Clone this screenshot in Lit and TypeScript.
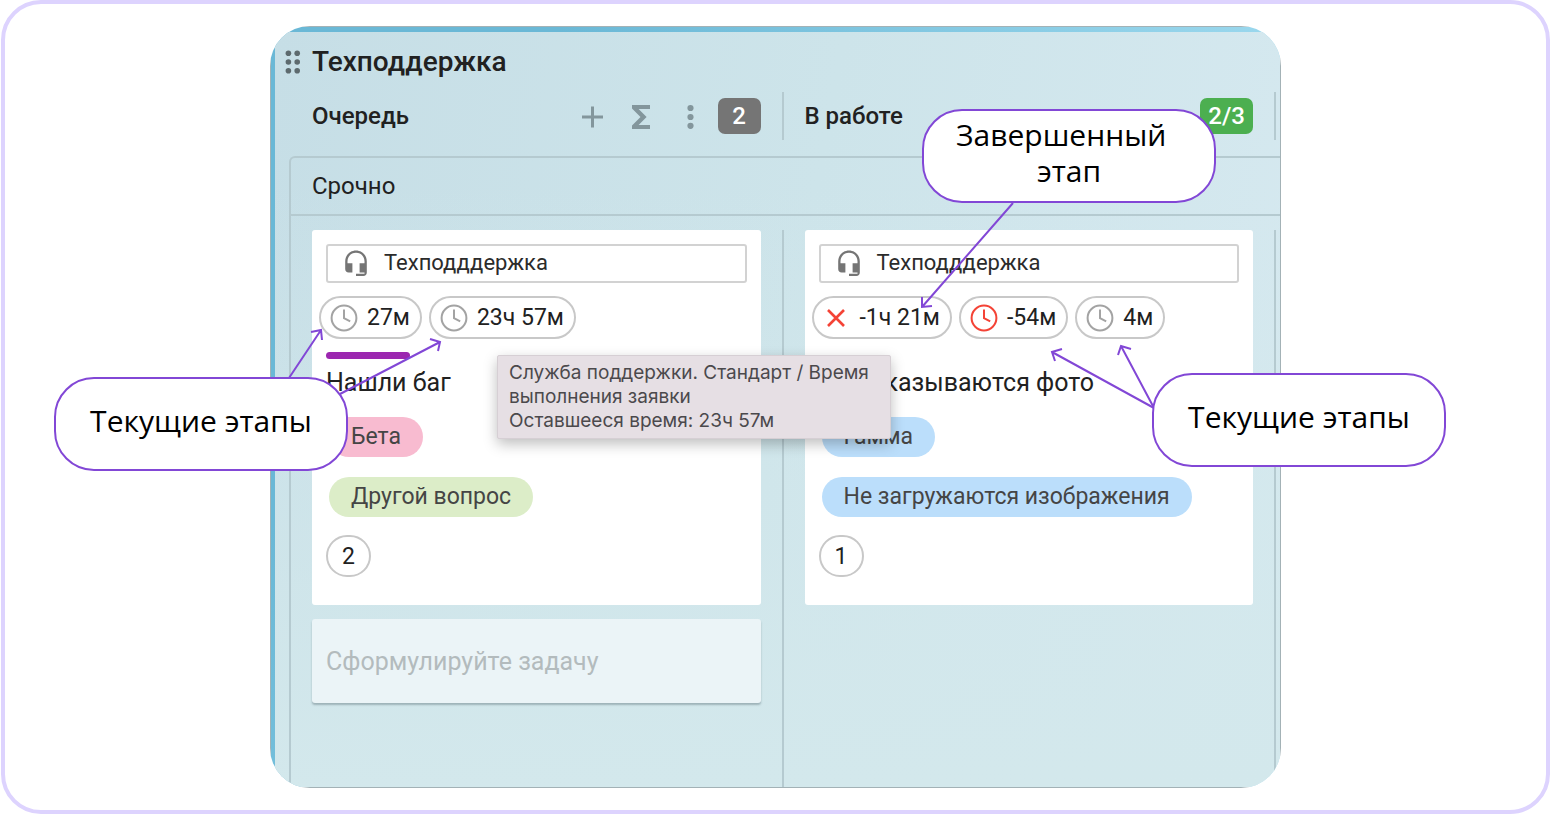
import { LitElement, html, svg, css, nothing } from "lit";
import { customElement, property } from "lit/decorators.js";

type Timer = { text: string; state: "normal" | "late" | "missed" };
type Tag = { text: string; tone: "pink" | "green" | "blue" };
type Card = { type: string; timers: Timer[]; bar: boolean; title: string; tags: Tag[]; count: number };

const FIRST: Card = {
  type: "Техподддержка",
  timers: [
    { text: "27м", state: "normal" },
    { text: "23ч 57м", state: "normal" },
  ],
  bar: true,
  title: "Нашли баг",
  tags: [
    { text: "Бета", tone: "pink" },
    { text: "Другой вопрос", tone: "green" },
  ],
  count: 2,
};

const SECOND: Card = {
  type: "Техподддержка",
  timers: [
    { text: "-1ч 21м", state: "missed" },
    { text: "-54м", state: "late" },
    { text: "4м", state: "normal" },
  ],
  bar: false,
  title: "Не показываются фото",
  tags: [
    { text: "Гамма", tone: "blue" },
    { text: "Не загружаются изображения", tone: "blue" },
  ],
  count: 1,
};

const clockIcon = html`<svg width="28" height="28" viewBox="0 0 28 28" fill="none" stroke="currentColor" stroke-width="2" aria-hidden="true">
  <circle cx="14" cy="14" r="12.4"></circle>
  <path d="M14 5.5V14.2L20.2 17.4"></path>
</svg>`;

const crossIcon = html`<svg width="28" height="28" viewBox="0 0 28 28" fill="none" stroke="currentColor" stroke-width="2.6" aria-hidden="true">
  <path d="M5 6L21 22M21 6L5 22"></path>
</svg>`;

const headsetIcon = html`<svg width="24" height="28" viewBox="0 0 24 28" aria-hidden="true">
  <path
    fill="#757575"
    d="M12 0.500C6 0.500 1.200 5.300 1.200 11.300V19C1.200 21 2.600 22.500 4.600 22.500H8.400V13.300H3.500V11.300C3.500 6.500 7.200 2.800 12 2.800S20.500 6.500 20.500 11.300V13.300H15.600V22.500H20.500V23.700H12V26H19.400C21.400 26 22.800 24.600 22.800 22.600V11.300C22.800 5.300 18 0.500 12 0.500Z"
  ></path>
</svg>`;

@customElement("task-card")
export class TaskCard extends LitElement {
  @property({ attribute: false }) card!: Card;

  static styles = css`
    :host {
      display: block;
    }
    .card {
      padding: 14px 14px 28px;
      background: #fff;
      border-radius: 3px;
    }
    .type {
      display: flex;
      align-items: center;
      gap: 16px;
      height: 35px;
      padding: 0 16px;
      border: 2px solid #d2d2d2;
      border-radius: 3px;
      font-size: 22px;
      line-height: 32px;
      color: #2b2b2b;
    }
    .type-name {
      padding-bottom: 2px;
    }
    .timers {
      display: flex;
      gap: 7px;
      margin: 13px 0 0 -7px;
    }
    .timer {
      display: flex;
      align-items: center;
      gap: 9px;
      height: 39px;
      padding: 0 10px 0 9px;
      border: 2px solid #c8c8c8;
      border-radius: 22px;
      font-size: 23px;
      white-space: nowrap;
    }
    .timer svg {
      color: #a3a3a3;
    }
    .late svg,
    .missed svg {
      color: #f44336;
    }
    .strip {
      height: 17px;
      padding-top: 13px;
    }
    .bar {
      width: 84px;
      height: 7px;
      border-radius: 4px;
      background: #9c27b0;
    }
    .title {
      margin: 0;
      font-size: 25px;
      font-weight: 400;
      line-height: 28px;
    }
    .tags {
      display: flex;
      flex-direction: column;
      align-items: flex-start;
      gap: 20px;
      margin: 20px 0 0 3px;
    }
    .tag {
      padding: 0 22px;
      border-radius: 20px;
      font-size: 23px;
      line-height: 40px;
      color: #454545;
      white-space: nowrap;
    }
    .pink {
      background: #f8bbd0;
    }
    .green {
      background: #dcedc8;
    }
    .blue {
      background: #bbdefb;
    }
    .count {
      display: flex;
      align-items: center;
      justify-content: center;
      width: 41px;
      height: 38px;
      margin-top: 18px;
      border: 2px solid #c8c8c8;
      border-radius: 22px;
      font-size: 23px;
    }
  `;

  render() {
    const c = this.card;
    return html`<article class="card">
      <div class="type">${headsetIcon}<span class="type-name">${c.type}</span></div>
      <div class="timers">
        ${c.timers.map(
          (t) => html`<span class="timer ${t.state}">${t.state === "missed" ? crossIcon : clockIcon}<span>${t.text}</span></span>`
        )}
      </div>
      <div class="strip">${c.bar ? html`<div class="bar"></div>` : nothing}</div>
      <h4 class="title">${c.title}</h4>
      <div class="tags">${c.tags.map((t) => html`<span class="tag ${t.tone}">${t.text}</span>`)}</div>
      <div class="count">${c.count}</div>
    </article>`;
  }
}

const ARROWS = [
  "M289 378L321 330M311 332L321 330L322 340",
  "M340 394L440 342M430 339L440 342L438 351",
  "M1013 203L922 307M922 297L922 307L932 306",
  "M1154 408L1052 352M1062 349L1052 352L1055 361",
  "M1154 408L1121 346M1131 349L1121 346L1118 355",
];

@customElement("app-root")
export class AppRoot extends LitElement {
  static styles = css`
    :host {
      display: block;
      font-family: Roboto, "Noto Sans", sans-serif;
      color: #212121;
    }
    .frame {
      box-sizing: border-box;
      display: flex;
      justify-content: center;
      min-height: 100vh;
      margin: 0 1px;
      padding: 22px 24px;
      border: 4px solid #ddd3fe;
      border-radius: 40px;
      background: #fff;
    }
    .scene {
      position: relative;
      display: flex;
      flex: 0 1 1011px;
      min-width: 0;
    }
    .clip {
      display: flex;
      flex: 1;
      min-width: 0;
      overflow: hidden;
      border-radius: 40px;
    }
    .edge {
      display: flex;
      flex: 1;
      min-width: 0;
      border: 1px solid #a3b2b6;
      background: linear-gradient(120deg, #6ab8d6 20%, #a4def2 80%);
    }
    .board {
      display: flex;
      flex-direction: column;
      flex: 1;
      min-width: 0;
      margin: 5px 0 0 4px;
      background: linear-gradient(rgba(212, 233, 235, 0) 20%, #d3e8ec 100%), linear-gradient(100deg, #c6dee6 0%, #cde4ea 50%, #d6e9f0 100%);
    }
    .board-head {
      display: flex;
      align-items: center;
      gap: 11px;
      height: 60px;
      padding-left: 10px;
    }
    .board-title {
      margin: 0;
      font-size: 28px;
      font-weight: 500;
      line-height: 32px;
    }
    .grip {
      display: block;
    }
    .columns,
    .cells {
      display: grid;
      grid-template-columns: 1fr 1fr 4px;
    }
    .columns {
      height: 48px;
      padding-left: 16px;
    }
    .column {
      display: flex;
      align-items: center;
      padding: 0 21px;
      border-right: 2px solid #b5cad0;
    }
    .column-title {
      flex: 1;
      margin: 0;
      font-size: 24px;
      font-weight: 500;
    }
    .tool {
      display: flex;
      align-items: center;
      justify-content: center;
      width: 49px;
      height: 40px;
      padding: 0;
      border: 0;
      background: none;
      color: #83969c;
    }
    .badge {
      box-sizing: border-box;
      min-width: 43px;
      margin-left: 3px;
      padding: 0 8px;
      border-radius: 7px;
      background: #757575;
      color: #fff;
      font-size: 24px;
      font-weight: 500;
      line-height: 36px;
      text-align: center;
    }
    .full {
      background: #4caf50;
    }
    .lane {
      display: flex;
      flex-direction: column;
      flex: 1;
      margin: 16px 0 0 14px;
      border: solid #b5cad0;
      border-width: 2px 0 0 2px;
      border-top-left-radius: 6px;
    }
    .lane-title {
      margin: 0;
      padding-left: 21px;
      border-bottom: 2px solid #b5cad0;
      font-size: 24px;
      font-weight: 400;
      line-height: 56px;
    }
    .cells {
      flex: 1;
      margin-top: 14px;
    }
    .cell {
      display: flex;
      flex-direction: column;
      gap: 14px;
      min-width: 0;
      padding: 0 21px;
      border-right: 2px solid #b5cad0;
    }
    .new-task {
      box-sizing: border-box;
      width: 100%;
      height: 84px;
      padding: 0 14px;
      border: 0;
      border-radius: 3px;
      background: #ebf4f7;
      box-shadow: 0 2px 2px rgba(60, 80, 90, 0.35);
      font: 400 25px Roboto, "Noto Sans", sans-serif;
      color: #212121;
    }
    .new-task::placeholder {
      color: #b3bbbd;
      opacity: 1;
    }
    .tooltip {
      box-sizing: border-box;
      position: absolute;
      left: 227px;
      top: 329px;
      width: 394px;
      padding: 5px 11px;
      border: 1px solid #d6cfd4;
      border-radius: 2px;
      background: #e6dfe4;
      box-shadow: 0 5px 14px rgba(0, 0, 0, 0.26);
      font: 400 19px/24px Inter, sans-serif;
      color: #4b494c;
      white-space: nowrap;
    }
    .arrows {
      position: absolute;
      left: 0;
      top: 0;
      overflow: visible;
      pointer-events: none;
    }
    .callout {
      box-sizing: border-box;
      position: absolute;
      display: flex;
      align-items: center;
      justify-content: center;
      width: 294px;
      height: 94px;
      padding-bottom: 6px;
      border: 2px solid #8247d6;
      border-radius: 40px;
      background: #fff;
      font: 400 30px/36px "Open Sans", "Noto Sans", sans-serif;
      color: #000;
      text-align: center;
    }
    .left {
      left: -216px;
      top: 351px;
    }
    .top {
      left: 652px;
      top: 83px;
    }
    .right {
      left: 882px;
      top: 347px;
    }
  `;

  render() {
    return html`<main class="frame">
      <div class="scene">
        <div class="clip">
          <div class="edge">
            <section class="board">
              <header class="board-head">
                <svg class="grip" width="16" height="24" viewBox="0 0 16 24" fill="#5d6a6e" aria-hidden="true">
                  ${[3.4, 12.2].map((x) => [3.2, 12, 20.8].map((y) => svg`<circle cx=${x} cy=${y} r="2.8"></circle>`))}
                </svg>
                <h2 class="board-title">Техподдержка</h2>
              </header>
              <div class="columns">
                <div class="column">
                  <h3 class="column-title">Очередь</h3>
                  <button class="tool" aria-label="Добавить">
                    <svg width="22" height="24" viewBox="0 0 22 24" stroke="currentColor" stroke-width="3">
                      <path d="M11.500 2.500V23.500M1 13H22"></path>
                    </svg>
                  </button>
                  <button class="tool" aria-label="Сумма">
                    <svg width="18" height="26" viewBox="0 0 18 26" fill="currentColor">
                      <path d="M0 2H18V6H6.600L14.600 14L6.600 22H18V26H0V22.500L8.500 14L0 5.500Z"></path>
                    </svg>
                  </button>
                  <button class="tool" aria-label="Меню">
                    <svg width="8" height="26" viewBox="0 0 8 26" fill="currentColor">
                      <circle cx="4.500" cy="5" r="3.100"></circle>
                      <circle cx="4.500" cy="14" r="3.100"></circle>
                      <circle cx="4.500" cy="22.800" r="3.100"></circle>
                    </svg>
                  </button>
                  <span class="badge">2</span>
                </div>
                <div class="column">
                  <h3 class="column-title">В работе</h3>
                  <span class="badge full">2/3</span>
                </div>
              </div>
              <section class="lane">
                <h3 class="lane-title">Срочно</h3>
                <div class="cells">
                  <div class="cell">
                    <task-card .card=${FIRST}></task-card>
                    <input class="new-task" type="text" placeholder="Сформулируйте задачу" aria-label="Сформулируйте задачу" />
                  </div>
                  <div class="cell">
                    <task-card .card=${SECOND}></task-card>
                  </div>
                </div>
              </section>
            </section>
          </div>
        </div>
        <div class="tooltip" role="tooltip">
          Служба поддержки. Стандарт / Время<br />выполнения заявки<br />Оставшееся время: 23ч 57м
        </div>
        <svg class="arrows" width="1011" height="762" viewBox="270 26 1011 762" fill="none" stroke="#8247d6" stroke-width="2" aria-hidden="true">
          ${ARROWS.map((d) => svg`<path d=${d}></path>`)}
        </svg>
        <div class="callout left">Текущие этапы</div>
        <div class="callout top">Завершенный&nbsp;&nbsp;<br />этап</div>
        <div class="callout right">Текущие этапы</div>
      </div>
    </main>`;
  }
}
